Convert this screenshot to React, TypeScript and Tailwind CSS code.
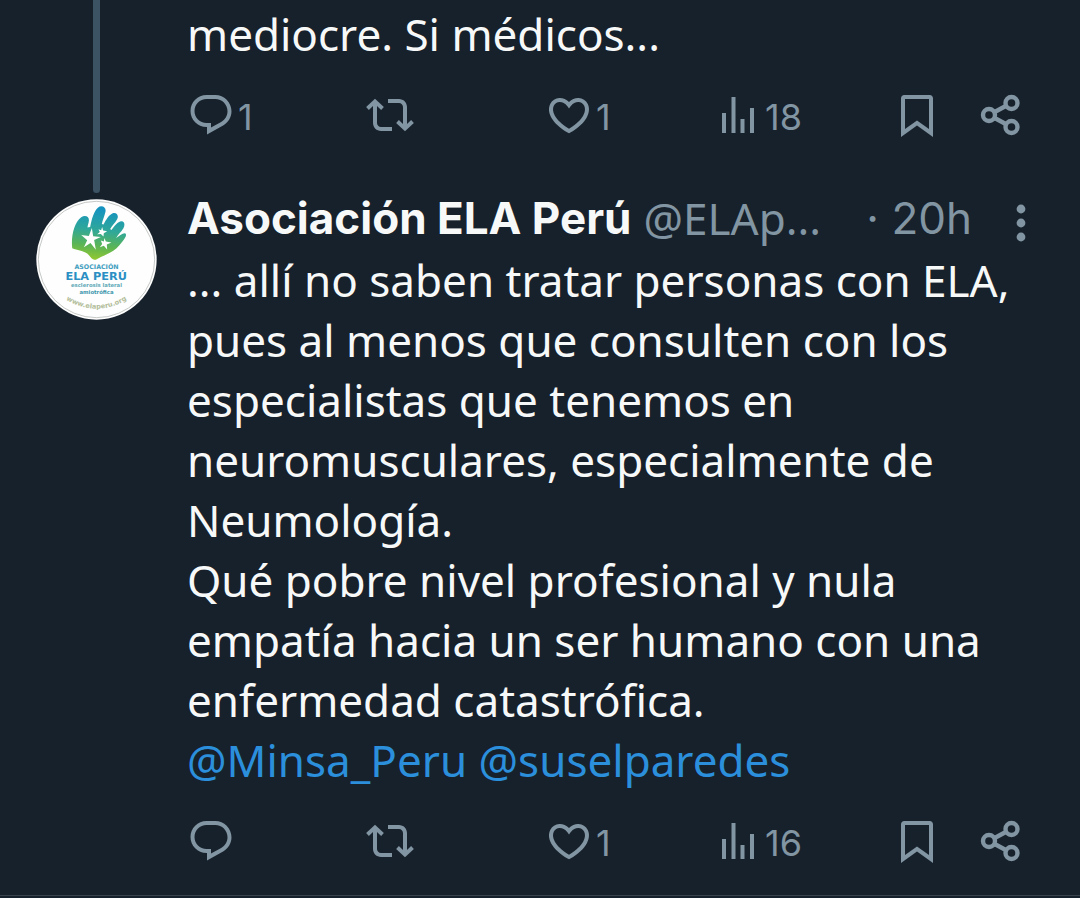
import type { ReactNode } from 'react';

const COMMENT =
  'M1.751 10c0-4.42 3.584-8 8.005-8h4.366c4.49 0 8.129 3.64 8.129 8.13 0 2.96-1.607 5.68-4.196 7.11l-8.054 4.46v-3.69h-.067c-4.49.1-8.183-3.51-8.183-8.01zm8.005-6c-3.317 0-6.005 2.69-6.005 6 0 3.37 2.77 6.08 6.138 6.01l.351-.01h1.761v2.3l5.087-2.81c1.951-1.08 3.163-3.13 3.163-5.36 0-3.39-2.744-6.13-6.129-6.13H9.756z';
const REPOST =
  'M4.5 3.88l4.432 4.14-1.364 1.46L5.5 7.55V16c0 1.1.896 2 2 2H13v2H7.5c-2.209 0-4-1.79-4-4V7.55L1.432 9.48.068 8.02 4.5 3.88zM16.5 6H11V4h5.5c2.209 0 4 1.79 4 4v8.45l2.068-1.93 1.364 1.46-4.432 4.14-4.432-4.14 1.364-1.46 2.068 1.93V8c0-1.1-.896-2-2-2z';
const HEART =
  'M16.697 5.5c-1.222-.06-2.679.51-3.89 2.16l-.805 1.09-.806-1.09C9.984 6.01 8.526 5.44 7.304 5.5c-1.243.07-2.349.78-2.91 1.91-.552 1.12-.633 2.78.479 4.82 1.074 1.97 3.257 4.27 7.129 6.61 3.87-2.34 6.052-4.64 7.126-6.61 1.111-2.04 1.03-3.7.477-4.82-.561-1.13-1.666-1.84-2.908-1.91zm4.187 7.69c-1.351 2.48-4.001 5.12-8.379 7.67l-.503.3-.504-.3c-4.379-2.55-7.029-5.19-8.382-7.67-1.36-2.5-1.41-4.86-.514-6.67.887-1.79 2.647-2.91 4.601-3.01 1.651-.09 3.368.56 4.798 2.01 1.429-1.45 3.146-2.1 4.796-2.01 1.954.1 3.714 1.22 4.601 3.01.896 1.81.846 4.17-.514 6.67z';
const VIEWS = 'M8.75 21V3h2v18h-2zM18 21V8.5h2V21h-2zM4 21V11h2v10H4zm9.25 0v-7h2v7h-2z';
const BOOKMARK =
  'M4 3.6C4 2.7 4.7 2 5.6 2h12.8c.9 0 1.6.7 1.6 1.6v19.34l-8-5.71-8 5.71V3.6zM6 4v15.06l6-4.29 6 4.29V4H6z';

function Icon({ d }: { d: string }) {
  return (
    <svg viewBox="0 0 24 24" className="size-12 shrink-0" fill="currentColor" aria-hidden="true">
      <path d={d} />
    </svg>
  );
}

function ShareIcon() {
  return (
    <svg
      viewBox="0 0 24 24"
      className="size-12 shrink-0"
      fill="none"
      stroke="currentColor"
      strokeWidth="2.2"
      aria-hidden="true"
    >
      <circle cx="6" cy="12" r="3" />
      <circle cx="17.25" cy="6" r="3" />
      <circle cx="17.25" cy="18" r="3" />
      <path d="M8.6 10.6l6-3.2M8.6 13.4l6 3.2" />
    </svg>
  );
}

function Action({ label, count, children }: { label: string; count?: number; children: ReactNode }) {
  return (
    <button type="button" aria-label={label} className="flex h-12 items-center justify-start">
      {children}
      {count !== undefined && <span className="pt-1 pl-[3px] text-4xl/[44px]">{count}</span>}
    </button>
  );
}

function Actions({ replies, likes, views }: { replies?: number; likes: number; views: number }) {
  return (
    <div className="mt-[27px] mr-[15px] grid grid-cols-[179fr_179fr_169fr_179fr_84fr_48px] font-['Inter',sans-serif] text-[#8295a2]">
      <Action label="Responder" count={replies}>
        <Icon d={COMMENT} />
      </Action>
      <Action label="Repostear">
        <Icon d={REPOST} />
      </Action>
      <Action label="Me gusta" count={likes}>
        <Icon d={HEART} />
      </Action>
      <Action label="Visualizaciones" count={views}>
        <Icon d={VIEWS} />
      </Action>
      <Action label="Guardar">
        <Icon d={BOOKMARK} />
      </Action>
      <Action label="Compartir">
        <ShareIcon />
      </Action>
    </div>
  );
}

function Avatar() {
  return (
    <svg viewBox="48 56 364 364" className="mt-1.5 size-[121px]" role="img" aria-label="Asociación ELA Perú">
      <defs>
        <linearGradient id="hand" x1="0.1" y1="0" x2="0" y2="1">
          <stop offset="0" stopColor="#1593c0" />
          <stop offset="0.4" stopColor="#2fa79a" />
          <stop offset="0.7" stopColor="#5cb554" />
          <stop offset="1" stopColor="#9ccb2b" />
        </linearGradient>
        <path id="arc" d="M128 352Q230 420 332 352" />
      </defs>
      <circle cx="230" cy="238" r="181" fill="#fdfefd" />
      <circle cx="230" cy="238" r="175" fill="none" stroke="#a9adab" strokeWidth="2" />
      <path
        fill="url(#hand)"
        d="M157 204C153 170 162 128 184 111C196 103 209 109 207 122C206 130 203 136 203 142L211 140C215 118 222 92 234 82C246 73 260 81 257 94C254 108 248 120 246 131L251 133C259 118 268 103 279 99C291 96 298 106 292 117C286 128 276 137 271 146L275 149C284 137 294 124 305 123C315 123 316 135 311 144C304 155 294 164 289 173C298 167 308 158 316 159C323 163 316 174 308 184C297 199 285 211 270 218C254 226 241 231 228 239C216 240 212 229 202 220C188 210 172 211 157 204Z"
      />
      <g fill="#fdfefd">
        <path d="M216 143L220 168L243 170L223 179L228 209L212 188L192 201L202 180L184 164L207 167Z" />
        <path d="M247 140L250 151L262 153L252 159L251 169L243 161L232 162L240 155L236 147L244 150Z" />
        <path d="M254 173L258 184L275 187L261 193L262 208L252 197L240 201L247 191L243 181L252 184Z" />
      </g>
      <g textAnchor="middle" className="font-['DejaVu_Sans',sans-serif] font-bold">
        <text x="230" y="267" fontSize="19" fill="#3f9dc0">
          ASOCIACIÓN
        </text>
        <text x="229" y="299" fontSize="34" fill="#2b8fc4">
          ELA PERÚ
        </text>
        <text x="230" y="322" fontSize="16" fill="#62a9b8">
          esclerosis lateral
        </text>
        <text x="230" y="341" fontSize="16" fill="#3f97ae">
          amiotrófica
        </text>
        <text fontSize="20" fill="#b3bd9a">
          <textPath href="#arc" startOffset="50%">
            www.elaperu.org
          </textPath>
        </text>
      </g>
    </svg>
  );
}

export default function App() {
  return (
    <main className="min-h-screen bg-[#17212b] font-['Noto_Sans',sans-serif] text-[44px]/[60px] text-[#f7f9f9]">
      <article className="flex pr-10">
        <div className="flex w-[187px] shrink-0 pl-[93px]">
          <div className="w-[7px] rounded-b bg-[#3c5364]" />
        </div>
        <div className="min-w-0 flex-1 pt-1 pb-[54px]">
          <p>mediocre. Si médicos...</p>
          <Actions replies={1} likes={1} views={18} />
        </div>
      </article>

      <article className="flex border-b border-[#38444d] pr-10 pb-[30px]">
        <div className="w-[187px] shrink-0 pl-9">
          <Avatar />
        </div>
        <div className="min-w-0 flex-1 pt-px">
          <header className="flex h-12 items-center whitespace-nowrap text-[#8295a2]">
            <h2 className="font-['Inter',sans-serif] font-bold text-[#f7f9f9]">Asociación ELA Perú</h2>
            <span className="ml-3">@ELAp...</span>
            <time className="ml-auto font-['Inter',sans-serif]">· 20h</time>
            <button type="button" aria-label="Más opciones" className="ml-[30px]">
              <svg viewBox="0 0 38 48" className="h-12 w-[38px]" fill="currentColor" aria-hidden="true">
                <circle cx="19" cy="15" r="4.4" />
                <circle cx="19" cy="29" r="4.4" />
                <circle cx="19" cy="43" r="4.4" />
              </svg>
            </button>
          </header>
          <p className="mt-2">
            ... allí no saben tratar personas con ELA, pues al menos que consulten con los especialistas que tenemos en
            neuromusculares, especialmente de Neumología.
            <br />
            Qué pobre nivel profesional y nula empatía hacia un ser humano con una enfermedad catastrófica.
            <br />
            <a href="#minsa" className="text-[#2b8fdc]">
              @Minsa_Peru
            </a>{' '}
            <a href="#susel" className="text-[#2b8fdc]">
              @suselparedes
            </a>
          </p>
          <Actions likes={1} views={16} />
        </div>
      </article>
    </main>
  );
}
